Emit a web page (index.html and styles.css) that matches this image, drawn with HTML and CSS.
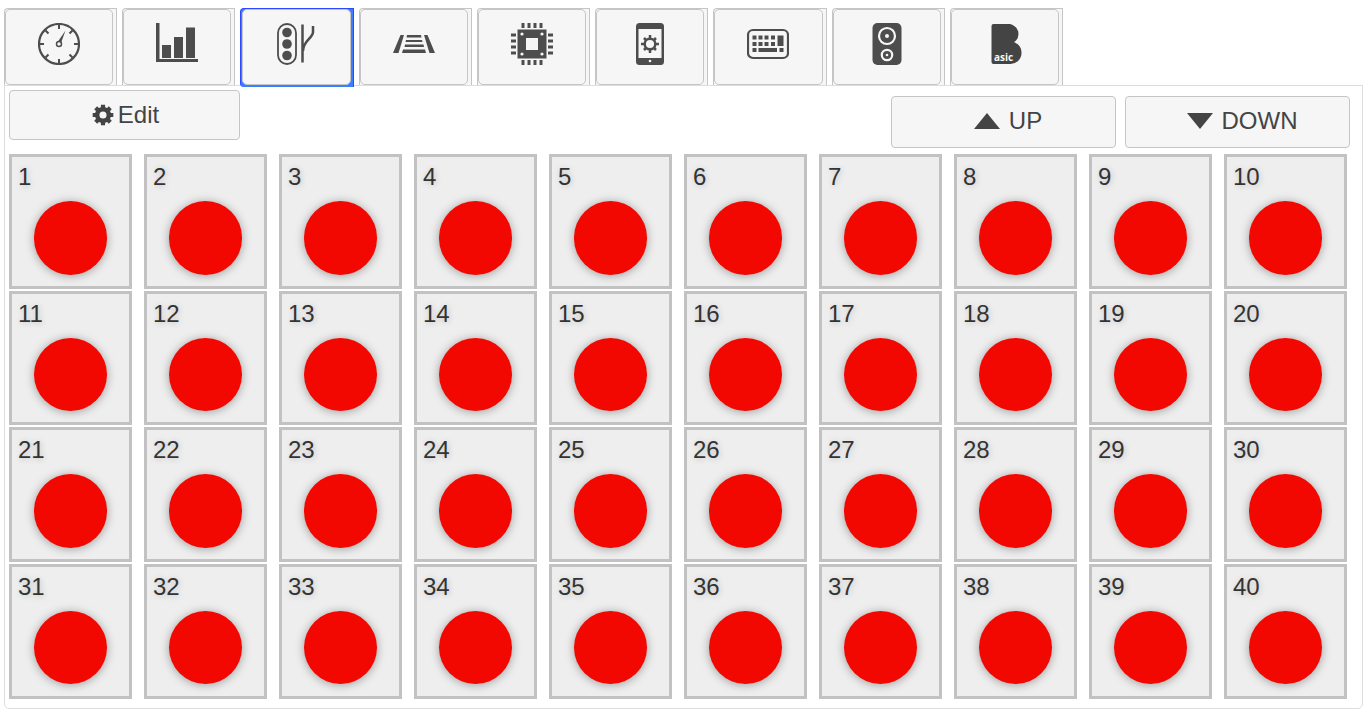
FILE: index.html
```
<!DOCTYPE html>
<html lang="en">
<head>
    <meta charset="UTF-8">
    <meta name="viewport" content="width=device-width, initial-scale=1.0">
    <title>Accessories</title>
    <link rel="stylesheet" href="styles.css">
</head>
<body>
    <ul class="tabs">
        <li class="tab">
            <button type="button" aria-label="Throttle">
                <svg class="icon" viewBox="0 0 42 42">
                    <circle cx="21" cy="21" r="20" fill="none" stroke="#4d4d4d" stroke-width="2.200"/>
                    <path d="M21 2v4M21 36v4M2 21h4M36 21h4M7.500 7.500l3 3M31.500 31.500l3 3M7.500 34.500l3-3M31.500 10.500l3-3" stroke="#4d4d4d" stroke-width="2"/>
                    <path d="M27.500 7.500L20 18.500l3 1.500z" fill="#4d4d4d"/>
                    <circle cx="21" cy="21" r="2.500" fill="#f6f6f6" stroke="#4d4d4d" stroke-width="1.500"/>
                </svg>
            </button>
        </li>
        <li class="tab">
            <button type="button" aria-label="Statistics">
                <svg class="icon" viewBox="0 0 42 42">
                    <path d="M0 0h3.500v36H42v3H0z"/>
                    <path d="M6 22h9v13H6zM18 14h9v21h-9zM30 4.500h9V35h-9z"/>
                </svg>
            </button>
        </li>
        <li class="tab active">
            <button type="button" aria-label="Accessories">
                <svg class="icon" viewBox="0 0 42 42">
                    <rect x="2" y="1" width="18" height="40" rx="9" fill="none" stroke="#4d4d4d" stroke-width="1.800"/>
                    <circle cx="11" cy="9.500" r="4.800"/>
                    <circle cx="11" cy="21" r="4.800"/>
                    <circle cx="11" cy="32.500" r="4.800"/>
                    <path d="M26.500 1.500v38M37 3v6c0 6-10 9-10 19" fill="none" stroke="#4d4d4d" stroke-width="2.500"/>
                </svg>
            </button>
        </li>
        <li class="tab">
            <button type="button" aria-label="Routes">
                <svg class="icon" viewBox="0 0 42 42">
                    <path d="M7.500 12h3.500L5.500 30H0zM31 12h3.500L42 30h-5.500z"/>
                    <path d="M14 12h14l.5 2.500h-15zM13 17h16l.5 2H12.500zM12 21.500h18.500l.5 2.500H11.500zM10 26.500h22l1 3.500H9z"/>
                </svg>
            </button>
        </li>
        <li class="tab">
            <button type="button" aria-label="Decoder">
                <svg class="icon" viewBox="0 0 42 42">
                    <path fill-rule="evenodd" d="M6.500 6.500h29v29h-29zM15 15v12h12V15z"/>
                    <path d="M12 0v5M18 0v5M24 0v5M30 0v5M12 37v5M18 37v5M24 37v5M30 37v5M0 12h5M0 18h5M0 24h5M0 30h5M37 12h5M37 18h5M37 24h5M37 30h5" stroke="#4d4d4d" stroke-width="3"/>
                    <g fill="#f6f6f6">
                        <circle cx="11" cy="11" r="1.600"/>
                        <circle cx="31" cy="11" r="1.600"/>
                        <circle cx="11" cy="31" r="1.600"/>
                        <circle cx="31" cy="31" r="1.600"/>
                    </g>
                </svg>
            </button>
        </li>
        <li class="tab">
            <button type="button" aria-label="Settings">
                <svg class="icon" viewBox="0 0 42 42">
                    <rect x="7" y="0" width="28" height="42" rx="3.500"/>
                    <rect x="9.500" y="6" width="23" height="29" fill="#f6f6f6"/>
                    <circle cx="21" cy="38" r="1.300" fill="#f6f6f6"/>
                    <circle cx="21" cy="21" r="5.300" fill="none" stroke="#4d4d4d" stroke-width="2.500"/>
                    <path d="M21 12v3M21 27v3M12 21h3M27 21h3M15 15l2 2M25 25l2 2M15 27l2-2M25 17l2-2" stroke="#4d4d4d" stroke-width="2.500"/>
                </svg>
            </button>
        </li>
        <li class="tab">
            <button type="button" aria-label="Keyboard">
                <svg class="icon" viewBox="0 0 42 42">
                    <rect x="1" y="7" width="40" height="28" rx="5" fill="none" stroke="#4d4d4d" stroke-width="2.200"/>
                    <path d="M5.500 12.500h4v4h-4zM11.500 12.500h4v4h-4zM17.500 12.500h4v4h-4zM24 12.500h4v4h-4zM30.500 12.500h6V23h-6z"/>
                    <path d="M5.500 19h4v4h-4zM11.500 19h4v4h-4zM17.500 19h4v4h-4zM24 19h4v4h-4z"/>
                    <path d="M5.500 25h4v4h-4zM11.500 25H30v4H11.500zM32.500 25h4v4h-4z"/>
                </svg>
            </button>
        </li>
        <li class="tab">
            <button type="button" aria-label="Sound">
                <svg class="icon" viewBox="0 0 42 42">
                    <rect x="6.500" y="0" width="29" height="42" rx="5"/>
                    <g fill="none" stroke="#f6f6f6" stroke-width="2.200">
                        <circle cx="21" cy="13" r="8"/>
                        <circle cx="21" cy="32" r="5.200"/>
                    </g>
                    <circle cx="21" cy="13" r="2" fill="#f6f6f6"/>
                    <circle cx="21" cy="32" r="1.300" fill="#f6f6f6"/>
                </svg>
            </button>
        </li>
        <li class="tab">
            <button type="button" aria-label="Basic">
                <svg class="icon" viewBox="0 0 42 42">
                    <g fill="#444">
                        <rect x="7.500" y="1" width="20" height="40" rx="2"/>
                        <rect x="10" y="1" width="24.500" height="20" rx="10"/>
                        <rect x="10" y="18.500" width="27.500" height="22.500" rx="11"/>
                    </g>
                    <text class="logo-text" x="10" y="38">asic</text>
                </svg>
            </button>
        </li>
    </ul>

    <main class="panel">
        <div class="toolbar">
            <button type="button" class="btn btn-edit">
                <svg class="gear" viewBox="0 0 22 22">
                    <circle cx="11" cy="11" r="5.800" fill="none" stroke="#444" stroke-width="4.500"/>
                    <path d="M11 .7v4M11 17.300v4M.7 11h4M17.300 11h4M3.700 3.700l3 3M15.300 15.300l3 3M3.700 18.300l3-3M15.300 6.700l3-3" stroke="#444" stroke-width="4.200"/>
                </svg>
                Edit
            </button>
            <div class="pager">
                <button type="button" class="btn btn-page">
                    <svg class="arrow" viewBox="0 0 26 16"><path d="M13 0l13 16H0z"/></svg>
                    UP
                </button>
                <button type="button" class="btn btn-page">
                    <svg class="arrow" viewBox="0 0 26 16"><path d="M0 0h26L13 16z"/></svg>
                    DOWN
                </button>
            </div>
        </div>
        <div class="grid" id="accessories"></div>
    </main>

    <script>
        // One button for each accessory
        const grid = document.getElementById("accessories");
        for (let i = 1; i <= 40; i++) {
            grid.innerHTML += `
                <div class="cell">
                    <button type="button" class="accessory">
                        <span class="number">${i}</span>
                        <span class="lamp"></span>
                    </button>
                </div>
            `;
        }
    </script>
</body>
</html>
```
FILE: styles.css
```
* {
    box-sizing: border-box;
}

body {
    margin: 8px 8px 8px 4px;
    background-color: #ffffff;
    color: #444444;
    font-family: "Liberation Sans", Arial, sans-serif;
    font-size: 24px;
}

button {
    font: inherit;
    color: inherit;
    cursor: pointer;
}

/* Tabs */
.tabs {
    display: grid;
    grid-template-columns: repeat(9, 1fr);
    gap: 5px;
    width: calc(78% - 1px);
    margin: 0;
    padding: 0;
    list-style: none;
}

.tab {
    padding: 0 3px 0 0;
    border: 1px solid #c5c5c5;
    border-bottom: none;
    border-radius: 4px 0 0 0;
    background-color: #f6f6f6;
}

.tab button {
    display: flex;
    align-items: center;
    justify-content: center;
    width: 100%;
    height: 76px;
    padding: 0 0 6px;
    border: 1px solid #c5c5c5;
    border-radius: 5px;
    background-color: #f6f6f6;
}

.tab.active {
    position: relative;
    margin-bottom: -2px;
    padding: 0 2px 2px 1px;
    border-color: #2a48ff;
    border-radius: 4px 0 0 4px;
    background-color: #3b7eff;
}

.icon {
    width: 42px;
    height: 42px;
    fill: #4d4d4d;
}

.logo-text {
    font-family: "Open Sans", sans-serif;
    font-size: 10px;
    font-weight: 700;
    fill: #f6f6f6;
}

/* Panel */
.panel {
    padding: 4px 12px 7px 4px;
    border: 1px solid #dddddd;
    border-radius: 0 0 5px 5px;
}

.toolbar {
    display: flex;
    justify-content: space-between;
    align-items: flex-start;
    margin-bottom: 6px;
}

.pager {
    display: flex;
    gap: 9px;
    margin-top: 6px;
}

.btn {
    display: flex;
    align-items: center;
    justify-content: center;
    padding: 0;
    border: 1px solid #c5c5c5;
    border-radius: 4px;
    background-color: #f6f6f6;
}

.btn-edit {
    width: 231px;
    height: 50px;
    gap: 4px;
    padding-left: 2px;
}

.btn-page {
    width: 225px;
    height: 52px;
    padding-bottom: 2px;
}

.gear {
    width: 22px;
    height: 22px;
}

.arrow {
    width: 26px;
    height: 16px;
    margin: 0 9px;
    fill: #444444;
}

/* Accessories */
.grid {
    display: grid;
    grid-template-columns: repeat(10, 1fr);
    column-gap: 12px;
    margin-right: 3px;
}

.cell {
    display: flex;
    aspect-ratio: 9 / 10;
    padding-bottom: 2px;
}

.accessory {
    display: flex;
    flex-direction: column;
    align-items: center;
    justify-content: flex-start;
    gap: 10px;
    width: 100%;
    padding: 6px 6px 0;
    border: 3px solid #c2c2c2;
    background-color: #eeeeee;
}

.number {
    align-self: flex-start;
    line-height: 28px;
    color: #333333;
    text-shadow: 1px 1px 6px rgba(0, 0, 0, 0.2);
}

.lamp {
    width: 70%;
    aspect-ratio: 1;
    border-radius: 50%;
    background-color: #f20800;
    box-shadow: 0 1px 10px rgba(0, 0, 0, 0.35);
}
```
